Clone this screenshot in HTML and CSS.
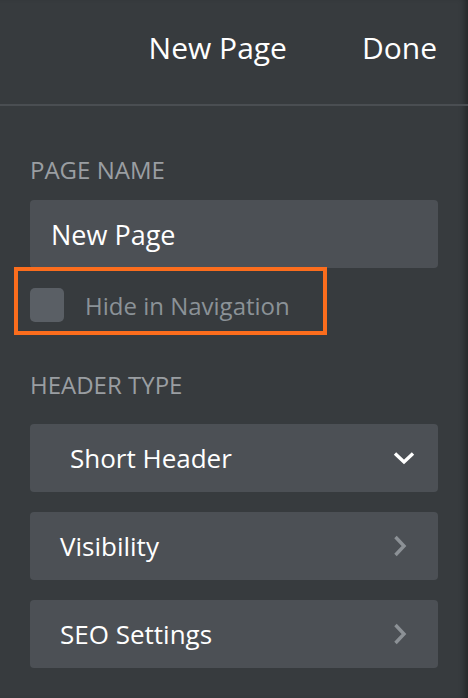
FILE: index.html
```html
<html>
  <head>
    <link rel="stylesheet" href="styles.css">
  </head>
  <body>
    <div class="panel">
      <header class="topbar">
        <div class="title">New Page</div>
        <div class="done">Done</div>
      </header>
      <main class="settings">
        <div class="label">Page Name</div>
        <div class="field">New Page</div>
        <div class="check-row">
          <div class="checkbox"></div>
          <div class="check-text">Hide in Navigation</div>
        </div>
        <div class="label label-header">Header Type</div>
        <div class="select">
          <span>Short Header</span>
          <svg class="chev-down" width="22" height="14" viewBox="0 0 22 14">
            <path d="M2 2.5 L11 11 L20 2.5" fill="none" stroke="#fff" stroke-width="3.4"/>
          </svg>
        </div>
        <div class="row">
          <span>Visibility</span>
          <svg class="chev-right" width="14" height="22" viewBox="0 0 14 22">
            <path d="M2.5 2 L11 11 L2.5 20" fill="none" stroke="#8c9196" stroke-width="3.4"/>
          </svg>
        </div>
        <div class="row">
          <span>SEO Settings</span>
          <svg class="chev-right" width="14" height="22" viewBox="0 0 14 22">
            <path d="M2.5 2 L11 11 L2.5 20" fill="none" stroke="#8c9196" stroke-width="3.4"/>
          </svg>
        </div>
      </main>
    </div>
  </body>
</html>
```

FILE: styles.css
```css
html {
  background: #373b3e;
  font-family: "Open Sans", sans-serif;
  color: white;
}
body {
  margin: 0;
}
.panel {
  width: 468px;
  height: 698px;
  box-shadow: inset -7px 0 6px -4px rgba(0, 0, 0, 0.35);
  overflow: hidden;
}
.topbar {
  height: 104px;
  border-bottom: 2px solid #4a4e52;
  display: flex;
  justify-content: flex-end;
  align-items: center;
  gap: 75px;
  padding-right: 31px;
  font-size: 30px;
  box-sizing: content-box;
}
.topbar div {
  padding-bottom: 10px;
}
.settings {
  padding: 50px 30px 0 30px;
  display: flex;
  flex-direction: column;
}
.label {
  text-transform: uppercase;
  font-size: 24px;
  line-height: 28px;
  color: #9a9ea2;
  margin-bottom: 16px;
}
.label-header {
  margin-top: 36px;
  margin-bottom: 25px;
}
.field {
  height: 68px;
  background: #4c5055;
  border-radius: 4px;
  display: flex;
  align-items: center;
  padding-left: 21px;
  font-size: 27px;
}
.check-row {
  width: 313px;
  height: 68px;
  box-sizing: border-box;
  margin: -1px 0 0 -16px;
  border: 4px solid #fb6d1d;
  display: flex;
  align-items: center;
  padding: 8px 0 0 12px;
}
.checkbox {
  width: 34px;
  height: 34px;
  border-radius: 5px;
  background: #5a5f65;
}
.check-text {
  margin-left: 21px;
  font-size: 24px;
  color: #8b9297;
}
.select, .row {
  height: 68px;
  background: #4c5055;
  border-radius: 4px;
  display: flex;
  align-items: center;
  justify-content: space-between;
  font-size: 26px;
}
.select {
  padding: 0 23px 0 40px;
}
.row {
  margin-top: 20px;
  padding: 0 31px 0 30px;
}
```
